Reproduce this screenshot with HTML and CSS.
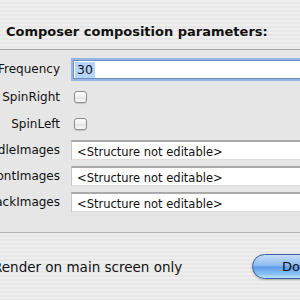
FILE: index.html
```html
<!DOCTYPE html>
<html lang="en">

<head>
    <meta charset="UTF-8">
    <title>Composer composition parameters</title>
    <link rel="stylesheet" href="styles.css">
</head>

<body>
    <div class="window">
        <div class="header">
            <h1 class="title">Composer composition parameters:</h1>
        </div>

        <div class="params">
            <label class="name" for="frequency">Frequency</label>
            <div class="field focused" id="frequency"><span class="selected">30</span></div>

            <label class="name">SpinRight</label>
            <div class="cell"><span class="check"></span></div>

            <label class="name">SpinLeft</label>
            <div class="cell"><span class="check"></span></div>

            <label class="name">MiddleImages</label>
            <div class="field">&lt;Structure not editable&gt;</div>

            <label class="name">FrontImages</label>
            <div class="field">&lt;Structure not editable&gt;</div>

            <label class="name">BackImages</label>
            <div class="field">&lt;Structure not editable&gt;</div>
        </div>

        <div class="footer">
            <label class="option"><span class="check"></span>Render on main screen only</label>
            <button class="done">Done</button>
        </div>
    </div>
</body>

</html>
```

FILE: styles.css
```css
*,
*::before,
*::after {
    box-sizing: border-box;
}

html,
body {
    margin: 0;
    height: 300px;
    overflow: hidden;
    background: #e8e8e8;
}

body {
    font-family: "DejaVu Sans", Verdana, sans-serif;
    font-size: 12px;
    color: #111;
}

/* the window is wider than the shot, so it starts off to the left */
.window {
    width: 412px;
    margin-left: -80px;
}

.header {
    height: 49px;
    padding: 24px 0 0 86px;
    background: repeating-linear-gradient(to bottom, #eeeeee 0 2px, #e7e7e7 2px 4px);
}

.title {
    margin: 0;
    font-size: 13px;
    font-weight: bold;
    line-height: 16px;
}

.params {
    display: grid;
    grid-template-columns: 140px 1fr;
    column-gap: 11px;
    grid-template-rows: 28px 28px 26px 26px 26px 26px;
    align-items: center;
    padding: 5px 0 17px 0;
    background: #e6e6e6;
    border-top: 1px solid #a4a4a4;
    border-bottom: 1px solid #b4b4b4;
}

.name {
    display: flex;
    justify-content: flex-end;
    white-space: nowrap;
}

.cell {
    display: flex;
    padding-left: 3px;
}

.check {
    display: inline-block;
    flex: none;
    width: 13px;
    height: 12px;
    border: 1px solid #8d8d8d;
    border-radius: 3px;
    background: linear-gradient(to bottom, #ffffff, #f0f0f0 50%, #e2e2e2 51%, #fafafa);
    box-shadow: 0 1px 1px rgba(0, 0, 0, 0.15);
}

.field {
    height: 20px;
    padding: 2px 5px 0;
    background: #fff;
    border-top: 2px solid #a9a9a9;
    border-left: 1px solid #c6c6c6;
    border-bottom: 1px solid #dedede;
    font-size: 11.5px;
    line-height: 16px;
    white-space: nowrap;
}

.field.focused {
    height: 19px;
    margin-left: 2px;
    padding: 1px 1px 0;
    border: 1px solid #6d8fbf;
    box-shadow: 0 0 0 2px #94b6e4;
}

.selected {
    display: inline-block;
    padding: 0 2px;
    background: #b5d5ff;
    font-size: 12.5px;
}

.footer {
    display: flex;
    align-items: center;
    height: 68px;
    padding: 0 0 0 54px;
    background: repeating-linear-gradient(to bottom, #eeeeee 0 2px, #e7e7e7 2px 4px);
}

.option {
    display: flex;
    align-items: center;
    gap: 6px;
    font-size: 13.5px;
    white-space: nowrap;
}

.done {
    flex: none;
    width: 80px;
    height: 25px;
    margin: 0 0 1px auto;
    padding: 0 0 0 1px;
    font: 13px "DejaVu Sans", Verdana, sans-serif;
    color: #111;
    text-align: left;
    text-indent: 28px;
    border: 1px solid #3b5f9e;
    border-radius: 13px;
    background: linear-gradient(to bottom, #c5ddf8 0%, #8fbcf0 45%, #5d9be8 52%, #8cc4f7 85%, #bfe6fd 100%);
    box-shadow: 0 1px 2px rgba(0, 0, 0, 0.25);
}
```
